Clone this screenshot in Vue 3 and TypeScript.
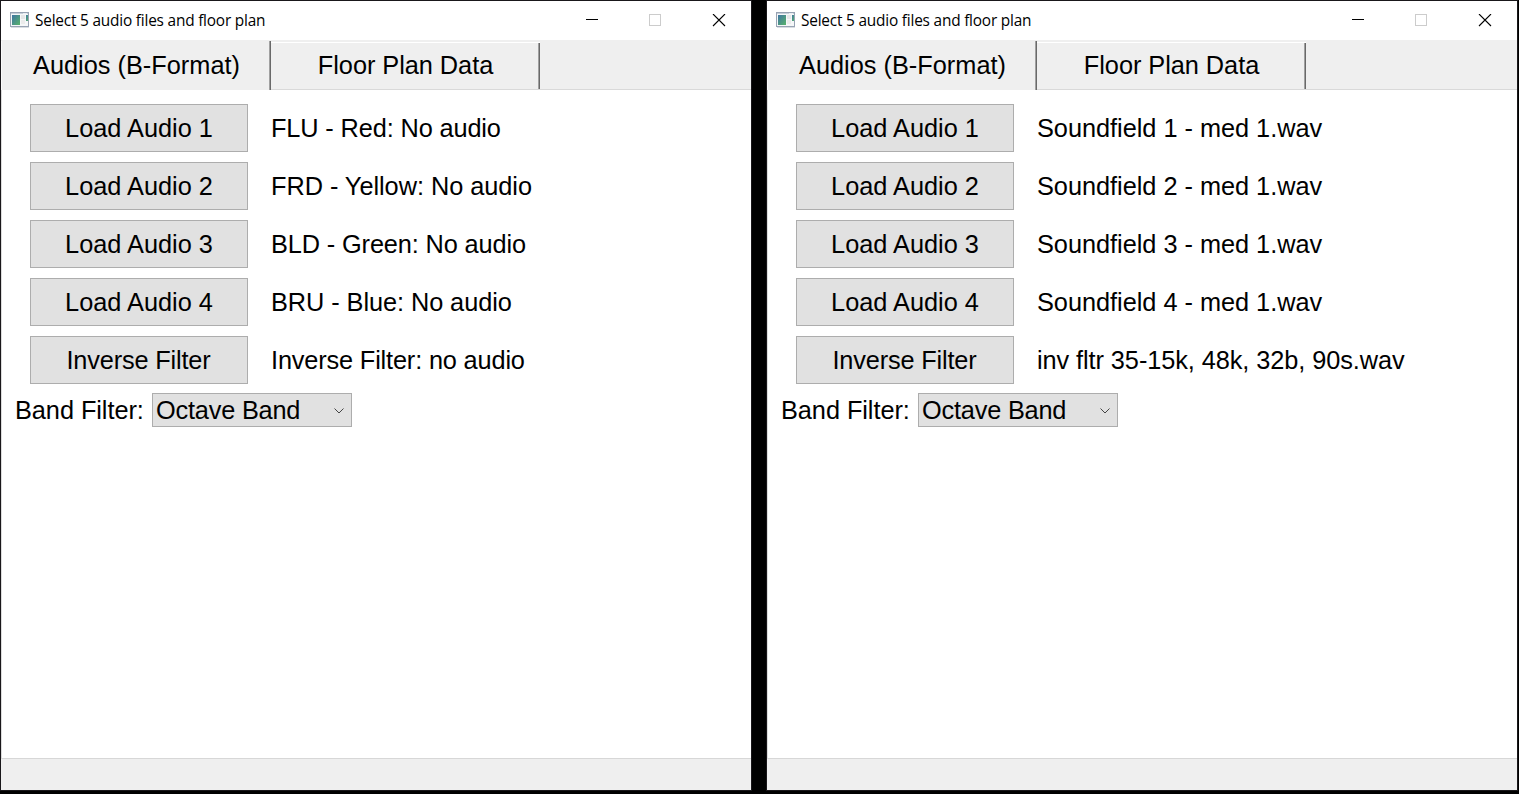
<script setup lang="ts">
interface Row { button: string; label: string; tracking: number }
interface Win { id: number; rows: Row[] }

const buttons = ['Load Audio 1', 'Load Audio 2', 'Load Audio 3', 'Load Audio 4', 'Inverse Filter']

function makeWindow(id: number, labels: [string, number][]): Win {
  return {
    id,
    rows: buttons.map((button, i) => ({ button, label: labels[i][0], tracking: labels[i][1] })),
  }
}

const windows: Win[] = [
  makeWindow(1, [
    ['FLU - Red: No audio', -0.13],
    ['FRD - Yellow: No audio', -0.04],
    ['BLD - Green: No audio', -0.13],
    ['BRU - Blue: No audio', -0.07],
    ['Inverse Filter: no audio', -0.16],
  ]),
  makeWindow(2, [
    ['Soundfield 1 - med 1.wav', -0.03],
    ['Soundfield 2 - med 1.wav', -0.03],
    ['Soundfield 3 - med 1.wav', -0.03],
    ['Soundfield 4 - med 1.wav', -0.03],
    ['inv fltr 35-15k, 48k, 32b, 90s.wav', -0.08],
  ]),
]
</script>

<template>
  <main class="desktop">
    <section v-for="w in windows" :key="w.id" class="window">
      <header class="titlebar">
        <svg class="app-icon" width="19" height="16" viewBox="0 0 19 16" shape-rendering="crispEdges">
          <defs>
            <linearGradient :id="'screen' + w.id" x1="0" y1="0" x2="1" y2="1">
              <stop offset="0" stop-color="#3f75a3" />
              <stop offset="1" stop-color="#58b36a" />
            </linearGradient>
          </defs>
          <rect x="0" y="0" width="19" height="15" fill="#98a3b3" />
          <rect x="1" y="1" width="17" height="1" fill="#c5ced8" />
          <rect x="13" y="1" width="4" height="1" fill="#e8edf2" />
          <rect x="1" y="2" width="17" height="12" fill="#f5f7f8" />
          <rect x="2" y="3" width="8" height="10" :fill="`url(#screen${w.id})`" />
          <rect x="11" y="3" width="4" height="4" fill="#e5e6e7" />
          <rect x="11" y="8" width="4" height="4" fill="#ebebeb" />
          <rect x="16" y="3" width="2" height="6" :fill="`url(#screen${w.id})`" />
          <rect x="1" y="15" width="18" height="1" fill="#d9dde2" />
        </svg>
        <span class="title">Select 5 audio files and floor plan</span>
        <svg class="controls" width="140" height="13" viewBox="0 0 140 13">
          <path d="M0 5.5h12" stroke="#000" fill="none" />
          <rect x="63.5" y="0.5" width="11" height="11" stroke="#ccc" fill="none" />
          <path d="M127 0l12 12M139 0l-12 12" stroke="#000" stroke-width="1.1" fill="none" />
        </svg>
      </header>
      <nav class="tabs">
        <div class="tab active"><span>Audios (B-Format)</span></div>
        <div class="tab"><span class="t-floor">Floor Plan Data</span></div>
        <div class="tab-rest"></div>
      </nav>
      <div class="page">
        <div v-for="r in w.rows" :key="r.button" class="row">
          <button class="load" :class="{ inverse: r.button === 'Inverse Filter' }" type="button">{{ r.button }}</button>
          <span class="file" :style="{ letterSpacing: r.tracking + 'px' }">{{ r.label }}</span>
        </div>
        <div class="filter">
          <span class="filter-label">Band Filter:</span>
          <div class="combo">
            <span class="combo-text">Octave Band</span>
            <svg width="10" height="6" viewBox="0 0 10 6"><path d="M.5.5L5 5 9.5.5" stroke="#444" fill="none" /></svg>
          </div>
        </div>
      </div>
      <footer class="status"></footer>
    </section>
  </main>
</template>

<style>
body { margin: 0; background: #000; overflow: hidden; }
</style>

<style scoped>
.desktop {
  display: flex;
  gap: 14px;
  width: 1519px;
  height: 794px;
  background: #000;
  overflow: hidden;
  color: #000;
  font-family: "Liberation Sans", Arial, sans-serif;
  font-size: 25.33px;
  line-height: 28px;
}
.window {
  box-sizing: border-box;
  flex: none;
  display: flex;
  flex-direction: column;
  width: 752px;
  height: 791px;
  border: 1px solid #19171a;
  background: #fff;
  white-space: nowrap;
}
.titlebar {
  display: flex;
  flex: none;
  align-items: center;
  height: 39px;
  padding: 0 25px 0 9px;
}
.app-icon { flex: none; margin-bottom: 1px; }
.title {
  margin-left: 6px;
  font: 15.4px/20px "Open Sans", "Noto Sans", sans-serif;
  letter-spacing: -0.2px;
}
.controls { margin-left: auto; }
.tabs {
  display: flex;
  flex: none;
  height: 50px;
  background: #efefef;
}
.tab {
  box-sizing: border-box;
  position: relative;
  display: flex;
  align-items: center;
  justify-content: center;
  width: 269px;
  margin-top: 2px;
  padding-bottom: 2px;
  border-top: 1px solid #fff;
  border-bottom: 1px solid #d9d9d9;
}
.tab::after {
  content: "";
  position: absolute;
  right: 0;
  top: 0;
  bottom: 0;
  width: 2px;
  box-sizing: border-box;
  background: #696969;
  border-left: 1px solid #a0a0a0;
}
.tab.active {
  width: 270px;
  margin-top: 1px;
  padding-bottom: 1px;
  border: 0;
  border-left: 1px solid #fafafa;
}
.t-floor { letter-spacing: -0.04px; }
.tab-rest { flex: 1; border-bottom: 1px solid #d9d9d9; }
.page {
  flex: 1;
  padding: 14px 0 0 13px;
  border-left: 1px solid #dcdcdc;
  border-bottom: 1px solid #d7d7d7;
}
.row {
  display: flex;
  align-items: center;
  height: 48px;
  margin: 0 0 10px 15px;
}
.load {
  box-sizing: border-box;
  width: 218px;
  height: 48px;
  margin: 0;
  padding: 0;
  border: 1px solid #adadad;
  background: #e1e1e1;
  color: #000;
  font: inherit;
}
.load.inverse { padding-right: 1px; letter-spacing: -0.17px; }
.file { margin-left: 23px; }
.filter { display: flex; align-items: center; height: 34px; margin-top: -1px; }
.filter-label { width: 137px; letter-spacing: -0.06px; }
.combo {
  box-sizing: border-box;
  display: flex;
  align-items: center;
  justify-content: space-between;
  width: 200px;
  height: 34px;
  padding: 0 7px 0 3px;
  border: 1px solid #adadad;
  background: #e1e1e1;
}
.combo-text { letter-spacing: -0.2px; }
.combo svg { margin-top: 1px; }
.status { flex: none; height: 31px; background: #efefef; }
</style>
